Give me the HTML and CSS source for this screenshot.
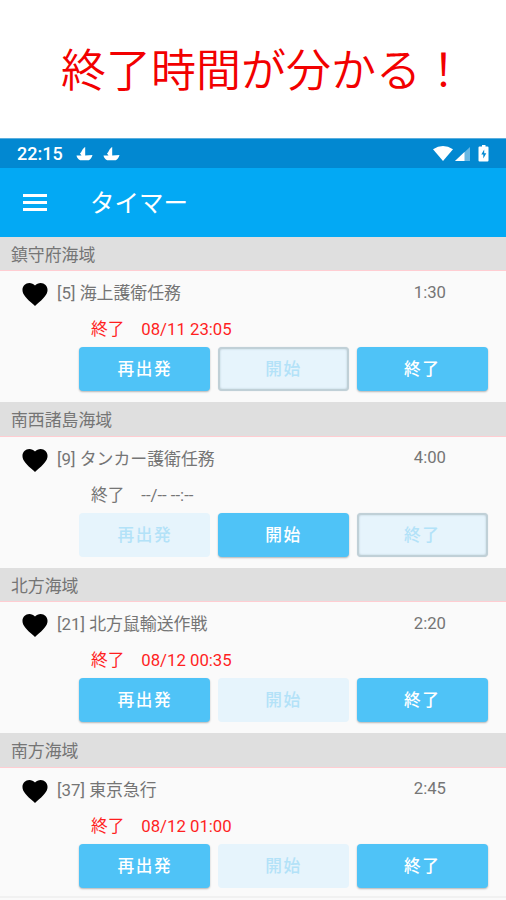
FILE: index.html
```
<!DOCTYPE html>
<html lang="ja">
<head>
<meta charset="utf-8">
<title>タイマー</title>
<link rel="stylesheet" href="styles.css">
</head>
<body>
<svg class="defs" aria-hidden="true">
  <symbol id="heart" viewBox="2 3 20 18.35"><path d="M12 21.35l-1.45-1.32C5.4 15.36 2 12.28 2 8.5 2 5.42 4.42 3 7.5 3c1.74 0 3.41.81 4.5 2.09C13.09 3.81 14.76 3 16.5 3 19.58 3 22 5.42 22 8.5c0 3.78-3.4 6.86-8.55 11.54L12 21.35z"/></symbol>
  <symbol id="boat" viewBox="0 0 17 14"><path d="M9.200 0V8.500L16.500 8C15.900 10.500 14.500 12.300 12.700 13.300H4.200C2.300 12.300.8 10.700.5 8.500H5.500L4 6.500C6 5 5.800 2 9.200 0z"/></symbol>
</svg>
<h1 class="headline">終了時間が分かる！</h1>
<div class="statusbar">
  <span class="clock">22:15</span>
  <svg class="boat"><use href="#boat"/></svg>
  <svg class="boat"><use href="#boat"/></svg>
  <svg class="system" viewBox="0 0 58 18">
    <path d="M0 4.200Q10 -2.200 20 4.200L10 16z"/>
    <path d="M37 2v14H22z" opacity=".4"/>
    <path d="M31.500 7v9H22z"/>
    <path fill-rule="evenodd" d="M49 0h3.500v1.500h2q1 0 1 1v13q0 1-1 1h-8q-1 0-1-1v-13q0-1 1-1h2.500zM51.200 4.500L48.300 9.500h2v4l3-5.200h-2.100z"/>
  </svg>
</div>
<header class="appbar">
  <div class="menu"><i></i><i></i><i></i></div>
  <span class="title">タイマー</span>
</header>
<main>
  <section class="area">
    <h2>鎮守府海域</h2>
    <div class="row"><svg class="heart"><use href="#heart"/></svg><span class="name">[5] 海上護衛任務</span><span class="time">1:30</span></div>
    <div class="finish active">終了　08/11 23:05</div>
    <div class="buttons"><button>再出発</button><button class="off outlined">開始</button><button>終了</button></div>
  </section>
  <section class="area">
    <h2>南西諸島海域</h2>
    <div class="row"><svg class="heart"><use href="#heart"/></svg><span class="name">[9] タンカー護衛任務</span><span class="time">4:00</span></div>
    <div class="finish">終了　--/-- --:--</div>
    <div class="buttons"><button class="off">再出発</button><button>開始</button><button class="off outlined">終了</button></div>
  </section>
  <section class="area">
    <h2>北方海域</h2>
    <div class="row"><svg class="heart"><use href="#heart"/></svg><span class="name">[21] 北方鼠輸送作戦</span><span class="time">2:20</span></div>
    <div class="finish active">終了　08/12 00:35</div>
    <div class="buttons"><button>再出発</button><button class="off">開始</button><button>終了</button></div>
  </section>
  <section class="area last">
    <h2>南方海域</h2>
    <div class="row"><svg class="heart"><use href="#heart"/></svg><span class="name">[37] 東京急行</span><span class="time">2:45</span></div>
    <div class="finish active">終了　08/12 01:00</div>
    <div class="buttons"><button>再出発</button><button class="off">開始</button><button>終了</button></div>
  </section>
</main>
</body>
</html>
```
FILE: styles.css
```
* { box-sizing: border-box; }
body {
  margin: 0;
  height: 900px;
  overflow: hidden;
  background: #fafafa;
  font-family: Roboto, "Noto Sans CJK JP", sans-serif;
  color: #757575;
}
.defs { display: none; }
.headline {
  margin: 0;
  height: 138px;
  padding: 3px 0 0 61px;
  background: #fff;
  color: #f20000;
  font-size: 45px;
  font-weight: 350;
  line-height: 138px;
  white-space: nowrap;
}
.statusbar {
  display: flex;
  align-items: center;
  height: 29.500px;
  padding: 2px 15px 0 17px;
  background: #0288d1;
  border-top: 1px solid #5aaede;
  color: #fff;
}
.clock { width: 59px; font-size: 18px; font-weight: 500; line-height: 28px; }
.boat { width: 17px; height: 14px; margin-right: 10px; fill: #fff; }
.system { width: 58px; height: 18px; margin: -1px 0 0 auto; fill: #fff; }
.appbar {
  display: flex;
  align-items: center;
  height: 69px;
  padding-left: 23px;
  background: #03a9f4;
  color: #fff;
}
.menu { display: flex; flex-direction: column; gap: 4px; width: 24px; }
.menu i { height: 3px; background: #fff; }
.title { margin-left: 43px; padding-top: 3px; font-size: 24.500px; font-weight: 400; line-height: 36px; }
.area { height: 165.500px; }
.last { height: 165px; border-bottom: 2px solid #f1f1f1; }
.area h2 {
  margin: 0;
  height: 34.500px;
  padding-left: 11px;
  background: #dfdfdf;
  border-bottom: 1px solid #ffcdd2;
  font-size: 16.850px;
  font-weight: 400;
  line-height: 36px;
}
.row {
  display: flex;
  align-items: center;
  height: 42px;
  padding: 0 60px 0 22px;
  font-size: 16.700px;
}
.heart { width: 26px; height: 23px; margin: 5px 9px 0 0; fill: #000; }
.name { margin-top: -1px; font-size: 16.900px; }
.time { margin-left: auto; }
.finish { height: 34.200px; padding-left: 91px; font-size: 16.750px; line-height: 33px; white-space: pre; }
.finish.active { color: #ff1f1f; }
.buttons {
  display: grid;
  grid-template-columns: repeat(3, 131px);
  gap: 7.700px;
  padding-left: 79.300px;
}
button {
  height: 44px;
  padding: 1px 0 0;
  border: 0;
  border-radius: 4px;
  background: #4fc3f7;
  box-shadow: 0 1px 2px rgba(0, 0, 0, .28);
  color: #fff;
  font: 500 16.700px/44px Roboto, "Noto Sans CJK JP", sans-serif;
  letter-spacing: 1.500px;
}
.off { background: #e6f4fc; color: #b3e2f8; box-shadow: none; }
.outlined { border: 2px solid #c0d0d7; box-shadow: inset 0 0 2px #b4c8d0, 0 0 1px #c8d4da; line-height: 40px; }
```
